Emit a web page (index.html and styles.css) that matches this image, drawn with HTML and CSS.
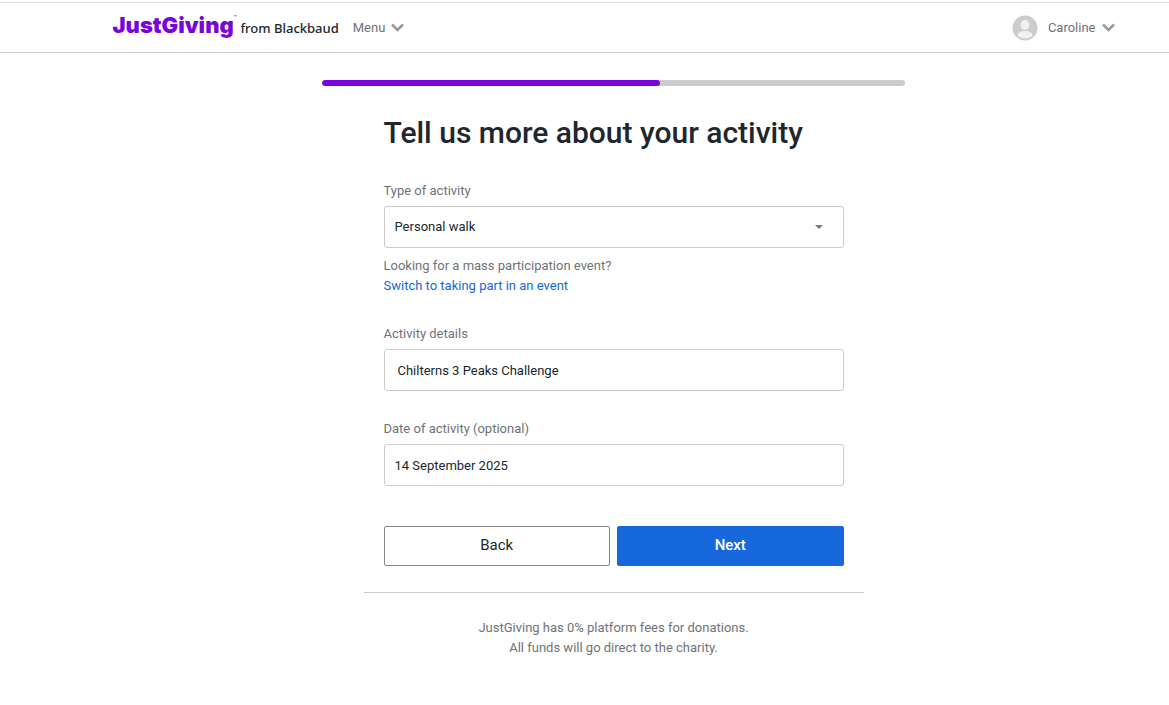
FILE: index.html
```html
<!DOCTYPE html>
<html lang="en">
<head>
    <meta charset="UTF-8">
    <meta name="viewport" content="width=device-width, initial-scale=1.0">
    <title>Tell us more about your activity - JustGiving</title>
    <link rel="stylesheet" href="styles.css">
</head>
<body>

    <!-- Header -->
    <header class="site-header">
        <div class="header-inner">
            <a class="logo" href="#">
                <span class="logo-name">JustGiving</span><span class="logo-tm">™</span>
                <span class="logo-owner">from Blackbaud</span>
            </a>
            <button class="nav-button" type="button">
                Menu
                <svg class="chevron" viewBox="0 0 13 9" aria-hidden="true"><path d="M1 1.500l5.500 5.500 5.500-5.500"/></svg>
            </button>
            <button class="nav-button account" type="button">
                <svg class="avatar" viewBox="0 0 26 26" aria-hidden="true">
                    <circle cx="13" cy="13" r="12.5" fill="#cccccc"/>
                    <ellipse cx="13" cy="10" rx="4.5" ry="5" fill="#f3eff5"/>
                    <path d="M5.500 20.500c0-3 3.200-4.500 7.500-4.500s7.500 1.500 7.500 4.500c-1.800 2-4.500 3-7.500 3s-5.700-1-7.500-3z" fill="#f3eff5"/>
                </svg>
                Caroline
                <svg class="chevron" viewBox="0 0 13 9" aria-hidden="true"><path d="M1 1.500l5.500 5.500 5.500-5.500"/></svg>
            </button>
        </div>
    </header>

    <main class="page">
        <progress class="steps" value="58" max="100" aria-label="Page setup progress"></progress>

        <form class="activity-form">
            <h1>Tell us more about your activity</h1>

            <div class="field">
                <label for="activity-type">Type of activity</label>
                <select id="activity-type" class="control">
                    <option>Personal walk</option>
                </select>
                <p class="hint">
                    Looking for a mass participation event?<br>
                    <a href="#">Switch to taking part in an event</a>
                </p>
            </div>

            <div class="field">
                <label for="activity-details">Activity details</label>
                <input type="text" id="activity-details" class="control control-details" value="Chilterns 3 Peaks Challenge">
            </div>

            <div class="field">
                <label for="activity-date">Date of activity (optional)</label>
                <input type="text" id="activity-date" class="control" value="14 September 2025">
            </div>

            <div class="actions">
                <button class="btn btn-back" type="button">Back</button>
                <button class="btn btn-next" type="submit">Next</button>
            </div>
        </form>

        <footer class="fees">
            JustGiving has 0% platform fees for donations.<br>
            All funds will go direct to the charity.
        </footer>
    </main>

</body>
</html>
```
FILE: styles.css
```css
:root {
    --purple: #7a04dd;
    --blue: #1768dc;
    --text: #20262d;
    --grey-text: #6f7378;
    --line: #cccccc;
    --page-shift: 58px;
}

* {
    box-sizing: border-box;
}

body {
    margin: 0;
    padding-top: 2px;
    background-color: #ffffff;
    color: var(--text);
    font-family: Roboto, "Liberation Sans", sans-serif;
    font-size: 13px;
    line-height: 20px;
}

/* --- Header --- */
.site-header {
    padding-left: var(--page-shift);
    border-top: 1px solid #e0e0e0;
    border-bottom: 1px solid var(--line);
}

.header-inner {
    display: flex;
    align-items: center;
    max-width: 1002px;
    height: 49px;
    margin: 0 auto;
}

.logo {
    display: flex;
    align-items: baseline;
    padding-bottom: 6px;
    color: var(--text);
    text-decoration: none;
    white-space: nowrap;
}

.logo-name {
    color: var(--purple);
    font-family: Inter, sans-serif;
    font-size: 22px;
    font-weight: 900;
    line-height: 28px;
}

.logo-tm {
    align-self: flex-start;
    color: var(--purple);
    font-size: 6px;
    line-height: 12px;
}

.logo-owner {
    margin-left: 3px;
    font-family: "Noto Sans", sans-serif;
    font-size: 13px;
    font-weight: 500;
}

.nav-button {
    display: flex;
    align-items: center;
    gap: 6px;
    margin-left: 14px;
    padding: 0;
    border: none;
    background: none;
    color: var(--grey-text);
    font: inherit;
    cursor: pointer;
}

.account {
    margin-left: auto;
}

.avatar {
    width: 26px;
    height: 26px;
    margin-right: 4px;
}

.chevron {
    width: 13px;
    height: 9px;
    fill: none;
    stroke: #999999;
    stroke-width: 2.5;
}

/* --- Page --- */
.page {
    display: flex;
    flex-direction: column;
    align-items: center;
    padding: 27px 0 40px var(--page-shift);
}

.steps {
    display: block;
    width: 100%;
    max-width: 583px;
    height: 6px;
    border: none;
    border-radius: 3px;
    background-color: var(--line);
    overflow: hidden;
    appearance: none;
}

.steps::-webkit-progress-bar {
    background-color: var(--line);
}

.steps::-webkit-progress-value {
    border-radius: 3px;
    background-color: var(--purple);
}

.activity-form {
    width: 100%;
    max-width: 500px;
    padding: 27px 20px 26px;
    border-bottom: 1px solid var(--line);
}

h1 {
    margin: 0 0 28px;
    font-size: 30px;
    font-weight: 500;
    line-height: 40px;
}

.field {
    margin-bottom: 28px;
}

label {
    display: block;
    margin-bottom: 5px;
    color: var(--grey-text);
}

.control {
    display: block;
    width: 100%;
    height: 42px;
    padding: 0 10px;
    border: 1px solid var(--line);
    border-radius: 3px;
    background-color: #ffffff;
    color: var(--text);
    font: inherit;
}

select.control {
    background-image: url("data:image/svg+xml,%3Csvg xmlns='http://www.w3.org/2000/svg' viewBox='0 0 8 4'%3E%3Cpath d='M0 0h8L4 4z' fill='%23777788'/%3E%3C/svg%3E");
    background-repeat: no-repeat;
    background-position: right 20px center;
    background-size: 8px 4px;
    appearance: none;
}

.control-details {
    padding: 0 13px;
}

.control:focus {
    outline: 2px solid var(--blue);
}

.hint {
    margin: 8px 0 0;
    color: var(--grey-text);
}

.hint a {
    color: var(--blue);
    text-decoration: none;
}

.actions {
    display: flex;
    gap: 7px;
    padding-top: 12px;
}

.btn {
    flex: 1;
    height: 40px;
    padding: 0 10px 2px;
    border: 1px solid #888888;
    border-radius: 2px;
    background-color: #ffffff;
    color: var(--text);
    font-family: inherit;
    font-size: 15px;
    cursor: pointer;
}

.btn-next {
    border-color: var(--blue);
    background-color: var(--blue);
    color: #ffffff;
    font-weight: 500;
}

.fees {
    padding-top: 25px;
    color: var(--grey-text);
    text-align: center;
}
```
